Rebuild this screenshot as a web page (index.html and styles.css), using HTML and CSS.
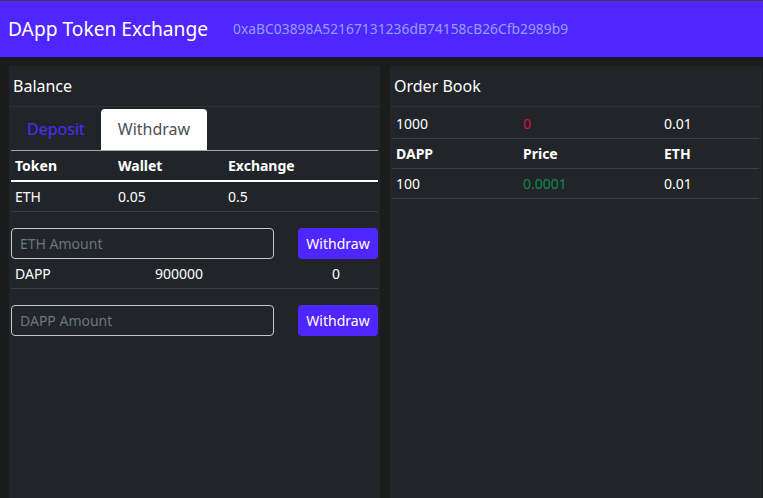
FILE: index.html
```html
<!DOCTYPE html>
<html>
<head>
<meta charset="utf-8">
<link rel="stylesheet" href="styles.css">
</head>
<body>
<nav class="navbar">
  <span class="brand">DApp Token Exchange</span>
  <span class="account">0xaBC03898A52167131236dB74158cB26Cfb2989b9</span>
</nav>
<main class="content">
  <section class="card card-balance">
    <div class="card-header">Balance</div>
    <div class="card-body">
      <div class="tabs">
        <span class="tab">Deposit</span>
        <span class="tab active">Withdraw</span>
      </div>
      <div class="table balance-table">
        <div class="row head">
          <span>Token</span><span>Wallet</span><span>Exchange</span>
        </div>
        <div class="row">
          <span>ETH</span><span>0.05</span><span>0.5</span>
        </div>
      </div>
      <form class="amount-form">
        <input class="amount" type="text" placeholder="ETH Amount">
        <button class="btn" type="button">Withdraw</button>
      </form>
      <div class="table token-table">
        <div class="row">
          <span>DAPP</span><span>900000</span><span>0</span>
        </div>
      </div>
      <form class="amount-form">
        <input class="amount" type="text" placeholder="DAPP Amount">
        <button class="btn" type="button">Withdraw</button>
      </form>
    </div>
  </section>
  <section class="card card-orders">
    <div class="card-header">Order Book</div>
    <div class="table order-table">
      <div class="row">
        <span>1000</span><span class="sell">0</span><span>0.01</span>
      </div>
      <div class="row head">
        <span>DAPP</span><span>Price</span><span>ETH</span>
      </div>
      <div class="row">
        <span>100</span><span class="buy">0.0001</span><span>0.01</span>
      </div>
    </div>
  </section>
</main>
</body>
</html>
```
FILE: styles.css
```css
* { box-sizing: border-box; }
html, body { margin: 0; padding: 0; }
body {
  background: #1c1c1c;
  color: #ffffff;
  font-family: "Noto Sans", "Open Sans", sans-serif;
  font-size: 14px;
  height: 498px;
  overflow: hidden;
}
.navbar {
  height: 57px;
  border-top: 1px solid #3b3b3b;
  background: #4f26ff;
  display: flex;
  align-items: center;
  padding: 0 0 2px 8px;
}
.brand {
  font-size: 19.2px;
  color: #ffffff;
  margin-right: 25px;
}
.account {
  font-size: 13.85px;
  color: #8f9fff;
}
.content {
  display: flex;
  gap: 10px;
  padding: 9px 1px 0 9px;
}
.card {
  background: #212529;
  height: 440px;
}
.card-balance { width: 371px; }
.card-orders { flex: 1; }
.card-header {
  height: 41px;
  border-bottom: 1px solid #2d3035;
  font-size: 16px;
  display: flex;
  align-items: center;
  padding: 0 4px 0 4px;
}
.card-body {
  padding: 2px 2px 0 2px;
}
.tabs {
  display: flex;
  height: 42px;
  border-bottom: 1px solid #a6a6a6;
}
.tab {
  display: flex;
  align-items: center;
  padding: 0 16px 2px;
  font-size: 16px;
  color: #4b2dff;
  border-radius: 4px 4px 0 0;
}
.tab.active {
  background: #ffffff;
  color: #495057;
  padding: 0 17px 2px;
}
.table .row {
  display: grid;
  align-items: center;
  height: 30px;
  border-bottom: 1px solid #3a3d42;
}
.table .row span { padding: 0 4px; }
.table .row.head { font-weight: 700; }
.balance-table .row { grid-template-columns: 103px 110px 1fr; }
.balance-table .row.head {
  height: 31px;
  border-bottom: 2px solid #ffffff;
}
.token-table .row { grid-template-columns: 140px 177px 1fr; height: 30px; }
.amount-form {
  display: flex;
  gap: 24px;
  margin: 16px 0 0 0;
}
.amount {
  width: 263px;
  height: 31px;
  background: transparent;
  border: 1px solid #c8c8c8;
  border-radius: 4px;
  padding: 0 8px;
  font-family: inherit;
  font-size: 14px;
  color: #ffffff;
}
.amount::placeholder { color: #6c757d; }
.btn {
  width: 80px;
  height: 31px;
  background: #4f26ff;
  color: #ffffff;
  border: none;
  border-radius: 4px;
  font-family: inherit;
  font-size: 14px;
  padding: 0;
}
.order-table { padding: 1px 3px 0 2px; }
.order-table .row { grid-template-columns: 127px 141px 1fr; }
.order-table .row:first-child { height: 31px; }
.sell { color: #d9103d; }
.buy { color: #0c8a4f; }
```
